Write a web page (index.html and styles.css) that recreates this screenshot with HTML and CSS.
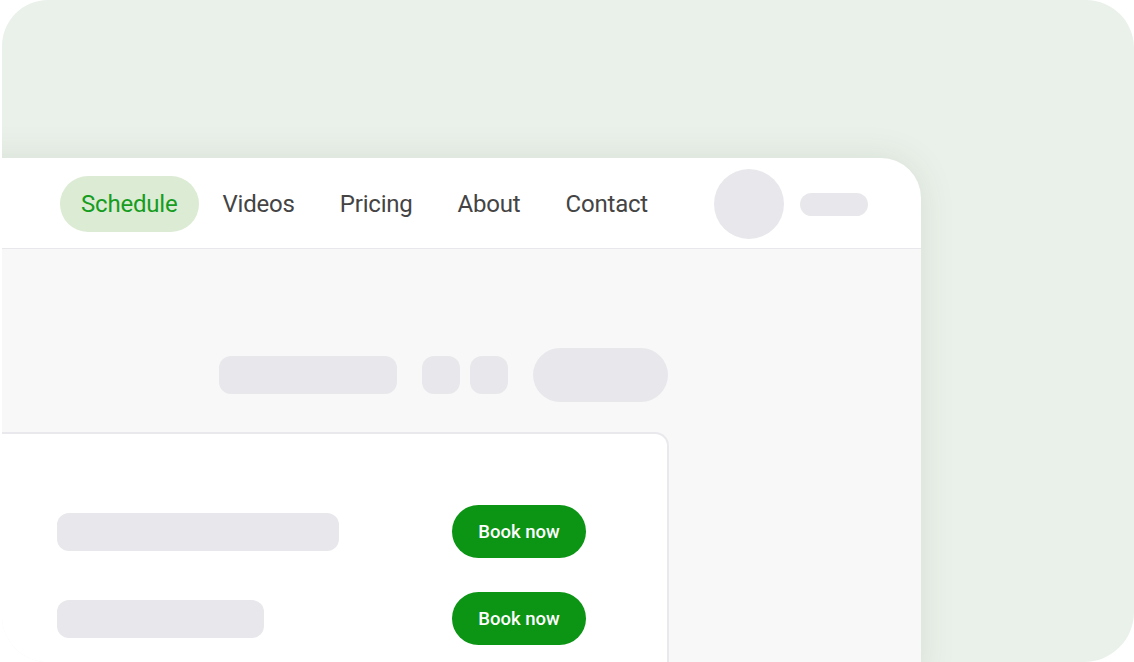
FILE: index.html
```html
<!DOCTYPE html>
<html lang="en">
<head>
<meta charset="utf-8">
<title>Schedule</title>
<link rel="stylesheet" href="styles.css">
</head>
<body>
<div class="stage">
  <div class="window">
    <header class="nav">
      <nav class="links">
        <a class="link active" href="#">Schedule</a>
        <a class="link" href="#">Videos</a>
        <a class="link" href="#">Pricing</a>
        <a class="link" href="#">About</a>
        <a class="link" href="#">Contact</a>
      </nav>
      <div class="user">
        <span class="avatar"></span>
        <span class="username"></span>
      </div>
    </header>
    <main class="content">
      <div class="toolbar">
        <span class="ph ph-search"></span>
        <span class="ph ph-square"></span>
        <span class="ph ph-square"></span>
        <span class="ph ph-pill"></span>
      </div>
      <section class="panel">
        <div class="row">
          <span class="ph ph-line" style="width:282px"></span>
          <button class="book">Book now</button>
        </div>
        <div class="row">
          <span class="ph ph-line" style="width:207px"></span>
          <button class="book">Book now</button>
        </div>
      </section>
    </main>
  </div>
</div>
</body>
</html>
```
FILE: styles.css
```css
* { box-sizing: border-box; }

html, body {
  margin: 0;
  padding: 0;
  background: #ffffff;
  width: 1134px;
  height: 662px;
  overflow: hidden;
  font-family: Roboto, "Liberation Sans", Arial, sans-serif;
}

.stage {
  margin-left: 2px;
  width: 1132px;
  height: 662px;
  background: #eaf1ea;
  border-radius: 46px 48px 50px 46px;
  padding-top: 158px;
  overflow: hidden;
}

.window {
  margin-left: -60px;
  width: 979px;
  height: 520px;
  background: #ffffff;
  border-radius: 0 40px 0 0;
  box-shadow: 0 0 36px rgba(40, 70, 40, 0.10);
  display: flex;
  flex-direction: column;
}

.nav {
  height: 91px;
  flex: none;
  border-bottom: 1px solid #e8e8ec;
  display: flex;
  align-items: center;
  justify-content: space-between;
  padding: 2px 53px 0 118px;
}

.links {
  display: flex;
  align-items: center;
  gap: 3px;
}

.link {
  display: block;
  height: 56px;
  line-height: 56px;
  padding: 0 21px;
  border-radius: 28px;
  font-size: 24px;
  letter-spacing: -0.2px;
  color: #444444;
  text-decoration: none;
}

.link.active {
  background: #dcebd3;
  color: #169c1f;
}

.user {
  display: flex;
  align-items: center;
  gap: 16px;
}

.avatar {
  width: 70px;
  height: 70px;
  border-radius: 50%;
  background: #e8e8ec;
}

.username {
  width: 68px;
  height: 23px;
  border-radius: 12px;
  background: #e8e8ec;
}

.content {
  flex: 1;
  background: #f8f8f8;
  padding: 99px 252px 0 0;
}

.toolbar {
  display: flex;
  align-items: center;
  justify-content: flex-end;
  height: 54px;
  gap: 10px;
  margin-right: 1px;
}

.ph {
  display: block;
  background: #e8e8ec;
}

.ph-search {
  width: 178px;
  height: 38px;
  border-radius: 12px;
  margin-right: 15px;
}

.ph-square {
  width: 38px;
  height: 38px;
  border-radius: 12px;
}

.ph-pill {
  width: 135px;
  height: 54px;
  border-radius: 27px;
  margin-left: 15px;
}

.panel {
  margin-top: 30px;
  height: 300px;
  background: #ffffff;
  border: 2px solid #e9e9ed;
  border-left: none;
  border-radius: 0 14px 0 0;
  padding: 71px 81px 0 115px;
  display: flex;
  flex-direction: column;
  gap: 34px;
}

.row {
  display: flex;
  align-items: center;
  justify-content: space-between;
  height: 53px;
}

.ph-line {
  height: 38px;
  border-radius: 12px;
}

.book {
  width: 134px;
  height: 53px;
  border: none;
  border-radius: 27px;
  background: #0c9415;
  color: #ffffff;
  font-family: Roboto, "Liberation Sans", Arial, sans-serif;
  font-size: 18.5px;
  font-weight: 500;
  padding: 0;
}
```
